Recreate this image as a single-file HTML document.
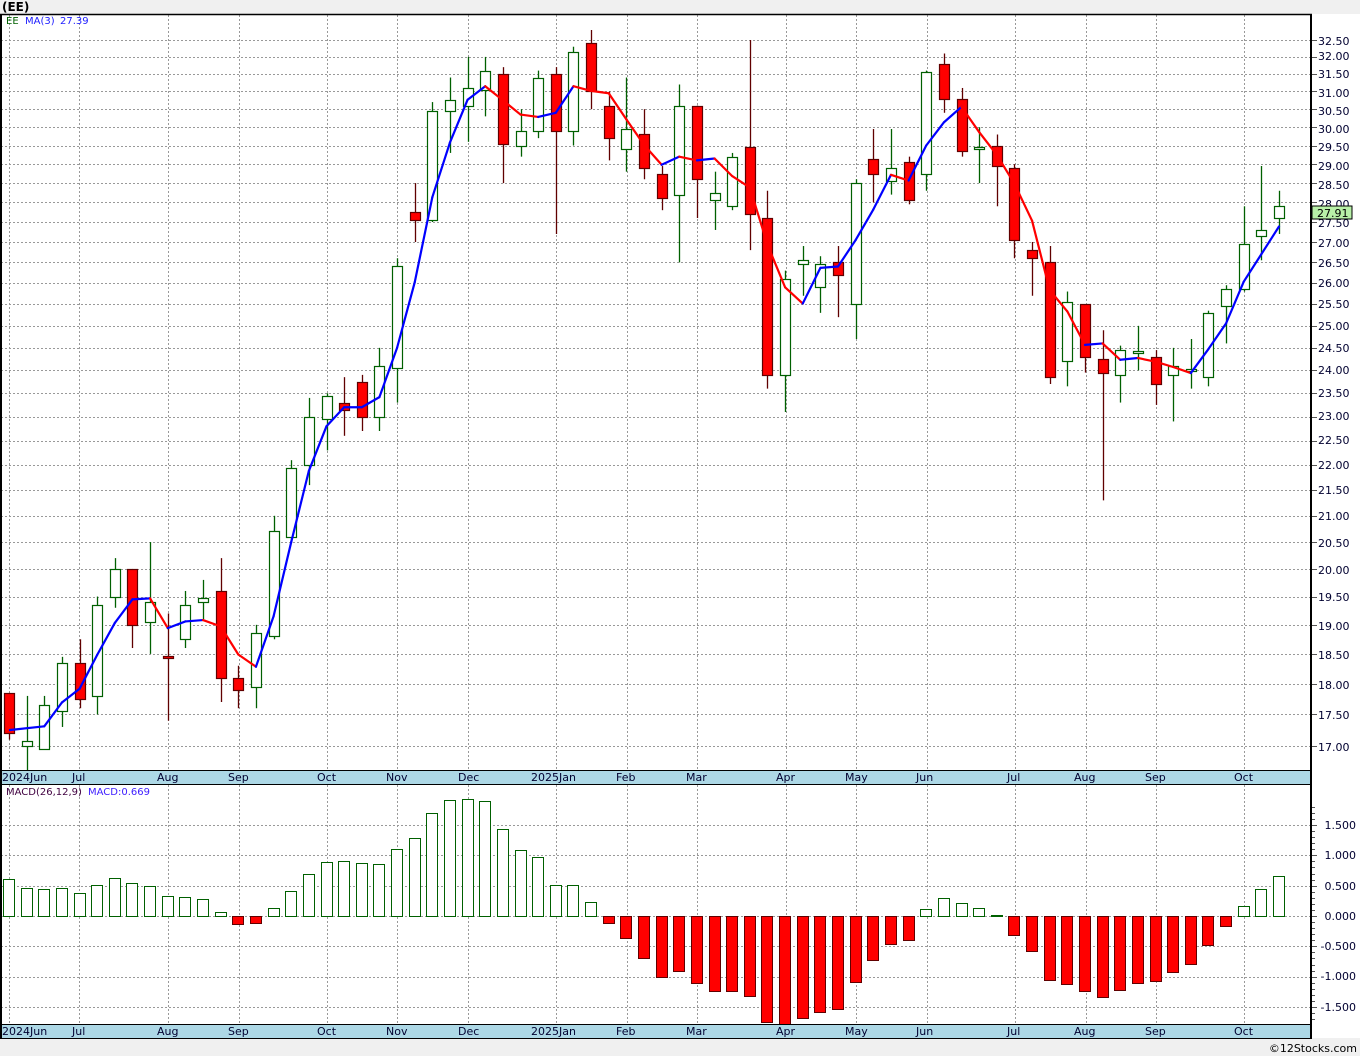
<!DOCTYPE html>
<html><head><meta charset="utf-8"><style>
html,body{margin:0;padding:0;background:#fff;}
body{width:1360px;height:1056px;overflow:hidden;position:relative;font-family:"Liberation Sans","DejaVu Sans",sans-serif;}
svg text{font-family:"DejaVu Sans","Liberation Sans",sans-serif;}
</style></head><body>
<svg id="s" width="1360" height="1056" xmlns="http://www.w3.org/2000/svg" style="position:absolute;left:0;top:0">
<rect x="0" y="0" width="1360" height="14" fill="#f0f0f0"/>
<rect x="0" y="1038" width="1360" height="18" fill="#f0f0f0"/>
<g id="grid"></g>
<g id="plot"></g>
<rect x="0" y="770" width="1311" height="14" fill="#add8e6"/>
<rect x="0" y="1024" width="1311" height="14" fill="#add8e6"/>
<g stroke="#000" fill="none">
<line x1="0" y1="14.5" x2="1312" y2="14.5" stroke-width="1.5"/>
<line x1="0" y1="770.5" x2="1312" y2="770.5"/>
<line x1="0" y1="784.5" x2="1312" y2="784.5"/>
<line x1="0" y1="1024.5" x2="1312" y2="1024.5"/>
<line x1="0" y1="1038.5" x2="1312" y2="1038.5"/>
<line x1="1" y1="14" x2="1" y2="1038" stroke-width="2"/>
<line x1="1311" y1="14" x2="1311" y2="1038" stroke-width="2"/>
</g>
<text x="2" y="11" font-size="12" font-weight="bold" fill="#000">(EE)</text>
<text x="6" y="24" font-size="10" fill="#006000">EE</text>
<text x="25" y="24" font-size="10" fill="#2020ff">MA(3)</text>
<text x="60" y="24" font-size="10" fill="#2020ff">27.39</text>
<text x="6" y="795" font-size="10" fill="#400040">MACD(26,12,9)</text>
<text x="88" y="795" font-size="10" fill="#4020ff">MACD:0.669</text>
<g font-size="11" fill="#000030">
<text x="2" y="781">2024Jun</text><text x="72" y="781">Jul</text><text x="157" y="781">Aug</text><text x="228" y="781">Sep</text><text x="317" y="781">Oct</text><text x="386" y="781">Nov</text><text x="458" y="781">Dec</text><text x="531" y="781">2025Jan</text><text x="616" y="781">Feb</text><text x="686" y="781">Mar</text><text x="776" y="781">Apr</text><text x="845" y="781">May</text><text x="916" y="781">Jun</text><text x="1007" y="781">Jul</text><text x="1074" y="781">Aug</text><text x="1145" y="781">Sep</text><text x="1234" y="781">Oct</text>
<text x="2" y="1035">2024Jun</text><text x="72" y="1035">Jul</text><text x="157" y="1035">Aug</text><text x="228" y="1035">Sep</text><text x="317" y="1035">Oct</text><text x="386" y="1035">Nov</text><text x="458" y="1035">Dec</text><text x="531" y="1035">2025Jan</text><text x="616" y="1035">Feb</text><text x="686" y="1035">Mar</text><text x="776" y="1035">Apr</text><text x="845" y="1035">May</text><text x="916" y="1035">Jun</text><text x="1007" y="1035">Jul</text><text x="1074" y="1035">Aug</text><text x="1145" y="1035">Sep</text><text x="1234" y="1035">Oct</text>
</g>
<g font-size="11" fill="#000030" id="plabels">
<text x="1318" y="45">32.50</text><text x="1318" y="60">32.00</text><text x="1318" y="78">31.50</text><text x="1318" y="97">31.00</text><text x="1318" y="115">30.50</text><text x="1318" y="133">30.00</text><text x="1318" y="151">29.50</text><text x="1318" y="170">29.00</text><text x="1318" y="189">28.50</text><text x="1318" y="208">28.00</text><text x="1318" y="227">27.50</text><text x="1318" y="247">27.00</text><text x="1318" y="267">26.50</text><text x="1318" y="287">26.00</text><text x="1318" y="308">25.50</text><text x="1318" y="330">25.00</text><text x="1318" y="352">24.50</text><text x="1318" y="374">24.00</text><text x="1318" y="397">23.50</text><text x="1318" y="420">23.00</text><text x="1318" y="444">22.50</text><text x="1318" y="469">22.00</text><text x="1318" y="494">21.50</text><text x="1318" y="520">21.00</text><text x="1318" y="547">20.50</text><text x="1318" y="574">20.00</text><text x="1318" y="601">19.50</text><text x="1318" y="630">19.00</text><text x="1318" y="659">18.50</text><text x="1318" y="689">18.00</text><text x="1318" y="719">17.50</text><text x="1318" y="751">17.00</text>
<text x="1356" y="829" text-anchor="end">1.500</text><text x="1356" y="859" text-anchor="end">1.000</text><text x="1356" y="890" text-anchor="end">0.500</text><text x="1356" y="920" text-anchor="end">0.000</text><text x="1356" y="950" text-anchor="end">-0.500</text><text x="1356" y="980" text-anchor="end">-1.000</text><text x="1356" y="1011" text-anchor="end">-1.500</text>
</g>
<rect x="1312" y="206" width="40" height="13" fill="#b8f0a8" stroke="#000"/>
<text x="1317" y="217" font-size="11" fill="#000">27.91</text>
<text x="1357" y="1052" font-size="11" fill="#000" text-anchor="end">©12Stocks.com</text>
</svg>
<script>
var NS="http://www.w3.org/2000/svg";
function el(p,t,a){var e=document.createElementNS(NS,t);for(var k in a)e.setAttribute(k,a[k]);p.appendChild(e);return e;}
function Y(p){return 40+(Math.log(32.5)-Math.log(p))*1089.5;}
var grid=document.getElementById('grid'),plot=document.getElementById('plot');
for(var p=17;p<=32.5001;p+=0.5){var y=Math.round(Y(p))+0.5;el(grid,'line',{x1:1,y1:y,x2:1311,y2:y,stroke:'#999','stroke-dasharray':'2,2'});el(grid,'line',{x1:1311,y1:y,x2:1317,y2:y,stroke:'#555'});}
var mv=[1.5,1,0.5,0,-0.5,-1,-1.5];
mv.forEach(function(v){var y=Math.round(916-v*60.7)+0.5;el(grid,'line',{x1:1,y1:y,x2:1311,y2:y,stroke:'#999','stroke-dasharray':'2,2'});el(grid,'line',{x1:1311,y1:y,x2:1317,y2:y,stroke:'#555'});});
for(var v=-1.7;v<=1.9;v+=0.1){var y=Math.round(916-v*60.7)+0.5;el(grid,'line',{x1:1311,y1:y,x2:1315,y2:y,stroke:'#555'});}
[9,79,168,239,327,397,468,556,627,697,786,856,927,1015,1086,1156,1244].forEach(function(x){
 el(grid,'line',{x1:x+.5,y1:15,x2:x+.5,y2:770,stroke:'#999','stroke-dasharray':'2,2'});
 el(grid,'line',{x1:x+.5,y1:785,x2:x+.5,y2:1024,stroke:'#999','stroke-dasharray':'2,2'});});
var d=[[17.85,17.2,17.85,17.1],[17.0,17.08,17.8,16.6],[16.95,17.65,17.8,16.95],[17.55,18.35,18.45,17.3],[18.35,17.75,18.75,17.6],[17.8,19.35,19.5,17.5],[19.5,20.0,20.2,19.3],[20.0,19.0,20.0,18.6],[19.05,19.4,20.5,18.5],[18.47,18.43,19.2,17.4],[18.75,19.35,19.6,18.6],[19.4,19.47,19.8,19.1],[19.6,18.1,20.2,17.7],[18.1,17.9,18.3,17.6],[17.95,18.85,19.0,17.6],[18.8,20.7,21.0,18.75],[20.6,21.95,22.1,20.5],[22.0,23.0,23.4,21.6],[22.95,23.45,23.5,22.3],[23.3,23.15,23.85,22.6],[23.75,23.0,23.9,22.7],[23.0,24.1,24.5,22.7],[24.05,26.4,26.6,23.3],[27.75,27.55,28.5,27.0],[27.55,30.45,30.7,27.5],[30.45,30.75,31.4,29.3],[30.6,31.1,32.0,29.6],[31.05,31.6,32.0,30.3],[31.5,29.55,31.7,28.5],[29.5,29.9,30.5,29.2],[29.9,31.4,31.6,29.7],[31.5,29.9,31.7,27.2],[29.9,32.15,32.3,29.5],[32.4,31.0,32.8,30.5],[30.6,29.7,31.0,29.1],[29.4,29.95,31.4,28.8],[29.8,28.9,30.5,28.6],[28.75,28.1,28.95,27.8],[28.2,30.6,31.2,26.5],[30.6,28.6,30.6,27.6],[28.05,28.25,28.8,27.3],[27.9,29.2,29.3,27.8],[29.45,27.7,32.5,26.8],[27.6,23.9,28.3,23.6],[23.9,26.1,26.3,23.1],[26.45,26.55,26.9,25.7],[25.9,26.45,26.65,25.3],[26.5,26.2,26.9,25.2],[25.5,28.5,28.6,24.7],[29.15,28.75,29.95,28.0],[28.55,28.9,29.95,28.2],[29.05,28.05,29.2,27.95],[28.75,31.55,31.6,28.3],[31.8,30.8,32.1,30.4],[30.8,29.35,31.1,29.2],[29.4,29.45,30.0,28.5],[29.5,28.95,29.8,27.9],[28.9,27.05,29.0,26.6],[26.8,26.6,27.0,25.7],[26.5,23.85,26.9,23.7],[24.2,25.55,25.8,23.65],[25.5,24.3,25.5,23.95],[24.25,23.95,24.9,21.3],[23.9,24.45,24.55,23.3],[24.38,24.42,25.0,24.0],[24.3,23.7,24.45,23.25],[23.9,24.1,24.5,22.9],[23.98,24.02,24.7,23.6],[23.85,25.3,25.35,23.65],[25.45,25.85,25.95,24.6],[25.85,26.95,27.9,25.8],[27.15,27.3,28.95,26.55],[27.6,27.91,28.3,27.2]];
var macdY=[879,888,889,888,893,885,878,883,886,896,897,899,912,924,923,908,891,874,862,861,863,864,849,838,813,800,799,801,829,850,857,885,885,902,923,938,958,977,971,983,991,991,996,1022,1024,1018,1012,1009,982,960,944,940,909,898,903,908,915,935,951,980,984,991,997,990,983,981,972,964,945,926,906,889,876];
var sp=(1279-9)/72;
macdY.forEach(function(t,i){var x=Math.round(9+i*sp)-6+.5;
 if(t<916){el(plot,'rect',{x:x,y:t+.5,width:11,height:916-t,fill:'#fff',stroke:'#006000'});}
 else if(t>916){el(plot,'rect',{x:x,y:916.5,width:11,height:t-916,fill:'#ff0000',stroke:'#600000'});}
 else el(plot,'line',{x1:x,y1:916.5,x2:x+11,y2:916.5,stroke:'#006000'});});
d.forEach(function(c,i){var x=Math.round(9+i*sp);var up=c[1]>=c[0];
 var col=up?'#006000':'#600000';
 el(plot,'line',{x1:x+.5,y1:Y(c[2]),x2:x+.5,y2:Y(c[3]),stroke:col,'stroke-width':1.3});
 var t=Math.round(Y(Math.max(c[0],c[1]))),b=Math.round(Y(Math.min(c[0],c[1])));if(b-t<2)b=t+2;
 el(plot,'rect',{x:x-5+.5,y:t+.5,width:10,height:b-t,fill:up?'#fff':'#ff0000',stroke:col,'stroke-width':1.2});});
for(var i=3;i<d.length;i++){var a=(d[i-3][1]+d[i-2][1]+d[i-1][1])/3,b=(d[i-2][1]+d[i-1][1]+d[i][1])/3;
 el(plot,'line',{x1:9+(i-1)*sp,y1:Y(a),x2:9+i*sp,y2:Y(b),stroke:b>=a?'#0000ff':'#ff0000','stroke-width':2.2,'stroke-linecap':'round'});}
el(plot,'line',{x1:9,y1:Y(17.25),x2:9+2*sp,y2:Y((d[0][1]+d[1][1]+d[2][1])/3),stroke:'#0000ff','stroke-width':2.2});
</script>
</body></html>
